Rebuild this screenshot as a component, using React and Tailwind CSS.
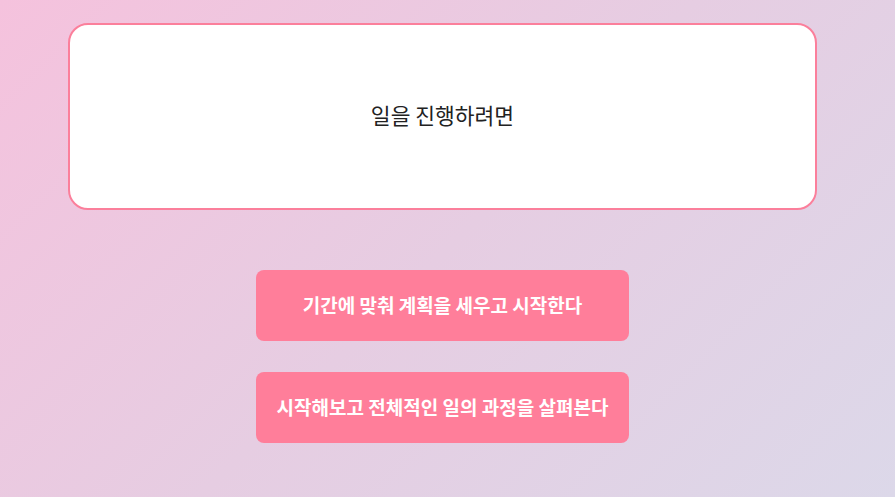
export default function App() {
  return (
    <div
      className="w-[895px] h-[497px] overflow-hidden bg-[linear-gradient(135deg,#f5c2dd_0%,#e6cde2_50%,#dcd8e9_100%)]"
      style={{ fontFamily: '"Noto Sans CJK KR", "Noto Sans", sans-serif' }}
    >
      <div className="w-[885px] flex flex-col items-center pt-[23px]">
        <div className="w-[749px] h-[187px] bg-white border-2 border-[#fb7f9b] rounded-[20px] flex items-center justify-center pb-[4px]">
          <span className="text-[21.5px] text-[#222] leading-none">일을 진행하려면</span>
        </div>
        <div className="flex flex-col gap-[31px] mt-[60px]">
          <button className="w-[373px] h-[71px] rounded-[8px] bg-[#ff7e9a] text-white text-[19px] font-semibold">
            기간에 맞춰 계획을 세우고 시작한다
          </button>
          <button className="w-[373px] h-[71px] rounded-[8px] bg-[#ff7e9a] text-white text-[19px] font-semibold">
            시작해보고 전체적인 일의 과정을 살펴본다
          </button>
        </div>
      </div>
    </div>
  );
}
